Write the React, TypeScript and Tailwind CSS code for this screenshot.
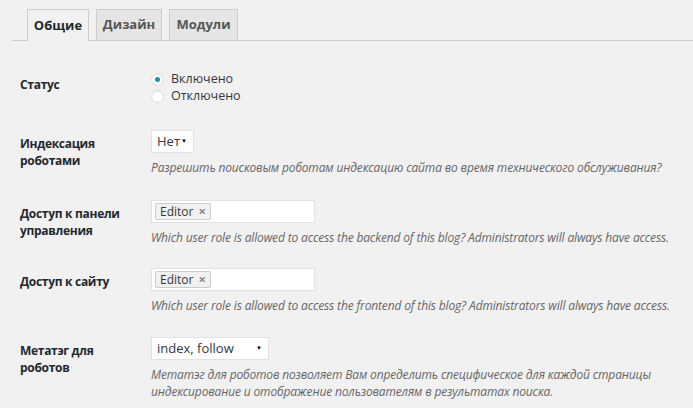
import React from "react";

const font = "font-['Open_Sans','Noto_Sans',sans-serif]";

const Tab = ({ label, active, width }: { label: string; active?: boolean; width: string }) => (
	<div
		className={
			(active
				? "h-[32px] flex items-center justify-center border border-b-0 border-[#ccc] bg-[#f1f1f1] text-[#23282d] text-[13px] font-bold -mb-px "
				: "h-[31px] flex items-center justify-center border border-b-0 border-[#ccc] bg-[#e5e5e5] text-[#555] text-[13px] font-bold ") +
			width
		}
	>
		{label}
	</div>
);

const Row = ({
	label,
	children,
	className,
}: {
	label: React.ReactNode;
	children: React.ReactNode;
	className?: string;
}) => (
	<div className={"flex " + (className ?? "")}>
		<div className="w-[131px] shrink-0 pt-[5px] text-[12px] leading-[17px] font-bold tracking-[-0.3px] text-[#23282d]">
			{label}
		</div>
		<div className="flex-1">{children}</div>
	</div>
);

const Desc = ({ children }: { children: React.ReactNode }) => (
	<p className="mt-[6px] text-[12px] leading-[17px] italic tracking-[-0.15px] text-[#666]">{children}</p>
);

const Select = ({ value, width }: { value: string; width: string }) => (
	<div
		className={
			"h-[23px] bg-white border border-[#e2e2e2] flex items-center justify-between pl-[5px] pr-[6px] text-[13px] text-[#32373c] " +
			width
		}
	>
		<span>{value}</span>
		<span className="text-[6px] text-black">▼</span>
	</div>
);

const Tokens = () => (
	<div className="h-[23px] w-[164px] bg-white border border-[#e2e2e2] flex items-center pl-[3px]">
		<span className="h-[17px] px-[4px] flex items-center gap-[5px] bg-[#f1f1f1] border border-[#ccc] rounded-[2px] text-[12px] text-[#32373c]">
			Editor <span className="text-[#888] text-[13px] font-bold leading-none">×</span>
		</span>
	</div>
);

const Radio = ({ checked, label }: { checked?: boolean; label: string }) => (
	<label className="flex items-center gap-[7px] h-[16px] text-[12.5px] leading-[16px] text-[#32373c]">
		<span className="w-[13px] h-[13px] rounded-full bg-white border border-[#ddd] shadow-[inset_0_1px_2px_rgba(0,0,0,0.07)] flex items-center justify-center">
			{checked ? <span className="w-[5px] h-[5px] rounded-full bg-[#1e8cbe]" /> : null}
		</span>
		{label}
	</label>
);

export default function App() {
	return (
		<div className={"w-[693px] h-[408px] overflow-hidden bg-[#f1f1f1] " + font}>
			<div className="pt-[9px] pl-[12px]">
				<div className="flex items-end gap-[7px] pl-[15px] border-b border-[#ccc] h-[32px]">
					<Tab label="Общие" active width="w-[62px]" />
					<Tab label="Дизайн" width="w-[66px]" />
					<Tab label="Модули" width="w-[69px]" />
				</div>
			</div>

			<div className="pl-[20px] pt-[30px]">
				<Row label="Статус">
					<div className="flex flex-col gap-[1px]">
						<Radio checked label="Включено" />
						<Radio label="Отключено" />
					</div>
				</Row>

				<Row label={<>Индексация<br />роботами</>} className="mt-[26px]">
					<Select value="Нет" width="w-[43px]" />
					<Desc>Разрешить поисковым роботам индексацию сайта во время технического обслуживания?</Desc>
				</Row>

				<Row label={<>Доступ к панели<br />управления</>} className="mt-[24px]">
					<Tokens />
					<Desc>Which user role is allowed to access the backend of this blog? Administrators will always have access.</Desc>
				</Row>

				<Row label="Доступ к сайту" className="mt-[22px]">
					<Tokens />
					<Desc>Which user role is allowed to access the frontend of this blog? Administrators will always have access.</Desc>
				</Row>

				<Row label={<>Метатэг для<br />роботов</>} className="mt-[23px]">
					<Select value="index, follow" width="w-[118px]" />
					<Desc>
						Метатэг для роботов позволяет Вам определить специфическое для каждой страницы
						<br />
						индексирование и отображение пользователям в результатах поиска.
					</Desc>
				</Row>
			</div>
		</div>
	);
}
